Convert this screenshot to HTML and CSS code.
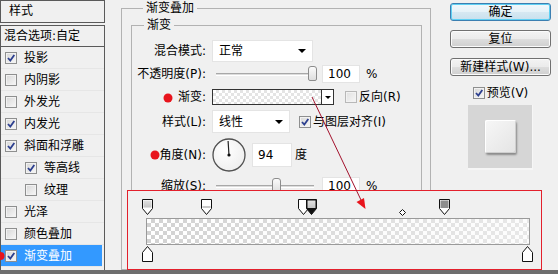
FILE: index.html
```html
<!DOCTYPE html>
<html lang="zh">
<head>
<meta charset="utf-8">
<title>图层样式 - 渐变叠加</title>
<link rel="stylesheet" href="styles.css">
</head>
<body>
<div class="page">
  <aside class="left">
    <div class="head">样式</div>
    <ul class="list">
      <li class="blend">混合选项:自定</li>
      <li><span class="cb"><svg viewBox="0 0 10 10"><path d="M2 5 L4.3 7.5 L8.3 2" /></svg></span>投影</li>
      <li><span class="cb"></span>内阴影</li>
      <li><span class="cb"></span>外发光</li>
      <li><span class="cb"><svg viewBox="0 0 10 10"><path d="M2 5 L4.3 7.5 L8.3 2" /></svg></span>内发光</li>
      <li><span class="cb"><svg viewBox="0 0 10 10"><path d="M2 5 L4.3 7.5 L8.3 2" /></svg></span>斜面和浮雕</li>
      <li class="sub"><span class="cb"><svg viewBox="0 0 10 10"><path d="M2 5 L4.3 7.5 L8.3 2" /></svg></span>等高线</li>
      <li class="sub"><span class="cb"></span>纹理</li>
      <li><span class="cb"></span>光泽</li>
      <li><span class="cb"></span>颜色叠加</li>
      <li class="sel"><span class="cb"><svg viewBox="0 0 10 10"><path d="M2 5 L4.3 7.5 L8.3 2" /></svg></span>渐变叠加</li>
    </ul>
  </aside>

  <main class="main">
    <fieldset class="outer">
      <legend>渐变叠加</legend>
      <fieldset class="inner">
        <legend>渐变</legend>

        <div class="row r1">
          <span class="lbl">混合模式:</span>
          <div class="select s-blend">正常<i class="tri"></i></div>
        </div>

        <div class="row r2">
          <span class="lbl">不透明度(P):</span>
          <div class="slider"><div class="track"></div><div class="thumb" style="left:96px"></div></div>
          <div class="field num">100</div>
          <span class="unit">%</span>
        </div>

        <div class="row r3">
          <span class="lbl">渐变:</span>
          <div class="gpick"><div class="swatch"></div><div class="drop"><i class="tri"></i></div></div>
          <span class="cb dim ml11"></span><span class="ctext">反向(R)</span>
        </div>

        <div class="row r4">
          <span class="lbl">样式(L):</span>
          <div class="select s-style">线性<i class="tri"></i></div>
          <span class="cb ml9"><svg viewBox="0 0 10 10"><path d="M2 5 L4.3 7.5 L8.3 2" /></svg></span><span class="ctext">与图层对齐(I)</span>
        </div>

        <div class="row r5">
          <span class="lbl">角度(N):</span>
          <svg class="dial" viewBox="0 0 34 34" width="34" height="34">
            <defs>
              <radialGradient id="dg" cx="0.4" cy="0.35" r="0.7">
                <stop offset="0" stop-color="#ffffff"/>
                <stop offset="1" stop-color="#eeeeee"/>
              </radialGradient>
            </defs>
            <circle cx="17" cy="17" r="16" fill="url(#dg)" stroke="#505050" stroke-width="1.3"/>
            <line x1="17" y1="17" x2="16.1" y2="3" stroke="#222" stroke-width="1.2"/>
            <circle cx="17" cy="17" r="1.6" fill="#111"/>
          </svg>
          <div class="field angle">94</div>
          <span class="unit deg">度</span>
        </div>

        <div class="row r6">
          <span class="lbl">缩放(S):</span>
          <div class="slider"><div class="track"></div><div class="thumb" style="left:60px"></div></div>
          <div class="field num">100</div>
          <span class="unit">%</span>
        </div>
      </fieldset>
    </fieldset>
  </main>

  <section class="side">
    <button class="btn default">确定</button>
    <button class="btn b2">复位</button>
    <button class="btn b3">新建样式(W)...</button>
    <div class="preview-chk"><span class="cb"><svg viewBox="0 0 10 10"><path d="M2 5 L4.3 7.5 L8.3 2" /></svg></span><span class="ctext">预览(V)</span></div>
    <div class="preview"><div class="pv-square"></div></div>
  </section>
</div>
<div class="bottom"></div>

<div class="editor">
  <div class="gbar"></div>
  <svg class="stops" viewBox="0 0 413 78" width="413" height="78">
    <defs>
      <linearGradient id="s1" x1="0" y1="0" x2="0" y2="1">
        <stop offset="0" stop-color="#e2e2e2"/><stop offset="1" stop-color="#c4c4c4"/>
      </linearGradient>
    </defs>
    <!-- opacity stops -->
    <path d="M14.5 8.5 H24.5 V17.5 L19.5 23.5 L14.5 17.5 Z" fill="#fff" stroke="#111"/>
    <rect x="15.5" y="9.5" width="8" height="7" fill="url(#s1)"/>

    <path d="M73.5 8.5 H83.5 V17.5 L78.5 23.5 L73.5 17.5 Z" fill="#fff" stroke="#111"/>
    <rect x="74.5" y="15" width="8" height="2" fill="#c8c8c8"/>

    <path d="M170.5 8.5 H180.5 V17.5 L175.5 23.5 L170.5 17.5 Z" fill="#fff" stroke="#111"/>

    <path d="M178.5 8.5 H188.5 V17.5 L183.5 23.5 L178.5 17.5 Z" fill="#111" stroke="#111"/>
    <rect x="179.5" y="9.5" width="8" height="7.5" fill="url(#s1)"/>

    <path d="M311.5 8.5 H321.5 V17.5 L316.5 23.5 L311.5 17.5 Z" fill="#fff" stroke="#111"/>
    <rect x="312.5" y="9.5" width="8" height="7.5" fill="#8e8e8e"/>

    <!-- midpoint diamond -->
    <polygon points="274.5,18.5 277.5,21.5 274.5,24.5 271.5,21.5" fill="#fff" stroke="#111"/>

    <!-- colour stops -->
    <path d="M19.5 55.5 L24.5 61.5 V70.5 H14.5 V61.5 Z" fill="#fff" stroke="#111"/>
    <path d="M399.5 55.5 L404.5 61.5 V70.5 H394.5 V61.5 Z" fill="#fff" stroke="#111"/>
  </svg>
</div>

<svg class="annot" viewBox="0 0 558 274" width="558" height="274">
  <line x1="312" y1="97" x2="361" y2="200" stroke="#a3112c" stroke-width="1"/>
  <polygon points="365.5,209 356.5,202 364,198" fill="#e8141c"/>
  <circle cx="168" cy="98" r="4.5" fill="#e8141c"/>
  <circle cx="155" cy="155" r="4.5" fill="#e8141c"/>
  <circle cx="0.5" cy="256" r="4" fill="#e8141c"/>
</svg>
</body>
</html>
```

FILE: styles.css
```css
* { box-sizing: border-box; }

html, body {
  margin: 0;
  padding: 0;
}

body {
  width: 558px;
  height: 274px;
  overflow: hidden;
  position: relative;
  background: #f0f0f0;
  color: #000;
  font-family: "DejaVu Sans", "Noto Sans CJK SC", sans-serif;
  font-size: 12px;
  line-height: 16px;
}

.page {
  display: flex;
  height: 270px;
}

.bottom {
  height: 4px;
  background: #6e6e6e;
}

/* ---------- left style list ---------- */
.left {
  width: 105px;
  flex: none;
  display: flex;
  flex-direction: column;
}

.head {
  height: 23px;
  border: 1px solid #5a5a5a;
  padding-left: 8px;
  line-height: 21px;
}

.list {
  list-style: none;
  margin: 2px 0 0;
  padding: 0;
  flex: 1;
  border: 1px solid #5a5a5a;
  border-bottom: none;
}

.list li {
  height: 22px;
  display: flex;
  align-items: center;
  padding-left: 4px;
  border-bottom: 1px solid #e6e6e6;
}

.list li.blend {
  height: 21px;
  padding-left: 3px;
  border-bottom: 1px solid #5a5a5a;
}

.list li.sub { padding-left: 24px; }

.list li .cb { margin-right: 7px; }

.list li.sel {
  background: #3399ff;
  color: #fff;
  margin-right: 2px;
}

/* ---------- checkbox ---------- */
.cb {
  display: inline-block;
  flex: none;
  width: 12px;
  height: 12px;
  border: 1px solid #8e8f8f;
  background: linear-gradient(135deg, #d6d6d6, #f8f8f8);
  box-shadow: inset 0 0 0 1px #f2f2f2;
}

.cb svg {
  display: block;
  width: 10px;
  height: 10px;
}

.cb svg path {
  fill: none;
  stroke: #2c3f8f;
  stroke-width: 1.8;
}

.cb.dim {
  border-color: #b8b8b8;
  background: linear-gradient(135deg, #e0e0e0, #f6f6f6);
}

.ml11 { margin-left: 11px; }
.ml9 { margin-left: 9px; }

.ctext { margin-left: 2px; }

/* ---------- main fieldsets ---------- */
.main {
  margin-left: 16px;
  width: 310px;
  flex: none;
}

fieldset {
  margin: 0;
  min-width: 0;
}

legend {
  padding: 0 3px;
  margin-left: 12px;
  line-height: 16px;
}

.outer {
  height: 270px;
  padding: 0 8px 0 9px;
  border: 1px solid #b2b2b2;
}

.inner {
  margin-top: 1px;
  height: 200px;
  padding: 7px 0 0 0;
  border: 1px solid #b2b2b2;
}

.row {
  display: flex;
  align-items: center;
}

.lbl {
  width: 74px;
  flex: none;
  text-align: right;
  margin-right: 6px;
  white-space: nowrap;
}

.r1 { height: 22px; }
.r2 { height: 18px; margin-top: 3px; }
.r3 { height: 16px; margin-top: 6px; }
.r4 { height: 23px; margin-top: 5px; }
.r5 { height: 34px; margin-top: 5px; }
.r6 { height: 18px; margin-top: 5px; }

.select {
  height: 100%;
  display: flex;
  align-items: center;
  justify-content: space-between;
  background: #fff;
  border: 1px solid #e4e4e4;
  padding: 0 6px 0 6px;
}

.s-blend { width: 101px; }
.s-style { width: 78px; }

.tri {
  display: block;
  width: 0;
  height: 0;
  border-left: 4px solid transparent;
  border-right: 4px solid transparent;
  border-top: 4px solid #000;
}

/* sliders */
.slider {
  position: relative;
  width: 106px;
  height: 100%;
  display: flex;
  align-items: center;
  padding: 0 4px;
}

.track {
  width: 100%;
  height: 3px;
  border-top: 1px solid #a8a8a8;
  border-bottom: 1px solid #ffffff;
  background: #dcdcdc;
}

.thumb {
  position: absolute;
  top: 1px;
  width: 9px;
  height: 15px;
  border: 1px solid #8c8c8c;
  border-radius: 3px 3px 2px 2px;
  background: linear-gradient(#fbfbfb, #dedede);
}

.field {
  background: #fff;
  border: 1px solid #e4e4e4;
  height: 100%;
  display: flex;
  align-items: center;
  padding-left: 5px;
}

.num { width: 38px; margin-left: 4px; }
.unit { margin-left: 6px; }
.angle { width: 40px; height: 24px; margin-left: 6px; }
.unit.deg { margin-left: 3px; }

.dial { display: block; flex: none; }

/* gradient picker */
.gpick {
  display: flex;
  height: 16px;
  border: 1px solid #333;
}

.swatch {
  width: 109px;
  border-right: 1px solid #333;
  background-color: #ffffff;
  background-image:
    linear-gradient(45deg, #e4e4e4 25%, transparent 25%, transparent 75%, #e4e4e4 75%),
    linear-gradient(45deg, #e4e4e4 25%, transparent 25%, transparent 75%, #e4e4e4 75%);
  background-size: 6px 6px;
  background-position: 0 0, 3px 3px;
}

.drop {
  width: 11px;
  background: #fff;
  display: flex;
  align-items: center;
  justify-content: center;
}

.drop .tri {
  border-left-width: 3px;
  border-right-width: 3px;
  border-top-width: 3px;
}

/* ---------- right column ---------- */
.side {
  margin-left: 19px;
  width: 101px;
  flex: none;
  display: flex;
  flex-direction: column;
  align-items: center;
  padding-top: 3px;
}

.btn {
  width: 101px;
  height: 18px;
  padding: 0;
  font: inherit;
  line-height: 14px;
  color: #000;
  border: 1px solid #707070;
  border-radius: 3px;
  background: linear-gradient(#f3f3f3 0%, #ebebeb 48%, #dddddd 52%, #cfcfcf 100%);
  box-shadow: inset 0 0 0 1px #fbfbfb;
}

.btn.default {
  border-color: #3c7fb1;
  box-shadow: inset 0 0 0 1px #5fd0f3;
  background: linear-gradient(#f2f8fb 0%, #e6f2f8 48%, #d6e8f2 52%, #c8e0ed 100%);
}

.b2 { margin-top: 9px; }
.b3 { margin-top: 10px; }

.preview-chk {
  margin-top: 9px;
  height: 16px;
  display: flex;
  align-items: center;
}

.preview {
  margin-top: 4px;
  width: 65px;
  height: 65px;
  background: #d6d6d6;
  border-right: 1px solid #f6f6f6;
  border-bottom: 2px solid #f6f6f6;
  display: flex;
  justify-content: center;
  align-items: center;
}

.pv-square {
  width: 31px;
  height: 33px;
  border-radius: 2px;
  background: linear-gradient(135deg, #f7f7f7, #e4e4e4);
  box-shadow: inset 1px 1px 0 #ffffff, inset -1px -1px 0 #cfcfcf, 1px 2px 2px rgba(0,0,0,0.35);
}

/* ---------- gradient editor overlay ---------- */
.editor {
  position: absolute;
  left: 127px;
  top: 190px;
  width: 415px;
  height: 80px;
  border: 1px solid #e3202c;
  background: #f0f0f0;
  z-index: 5;
}

.gbar {
  position: absolute;
  left: 18px;
  top: 27px;
  width: 384px;
  height: 27px;
  border: 1px solid #9a9a9a;
  background-color: #ffffff;
  background-image:
    linear-gradient(90deg, rgba(240,240,240,0) 0%, rgba(246,246,246,0.25) 40%, rgba(250,250,250,0.55) 100%),
    linear-gradient(45deg, #d2d2d2 25%, transparent 25%, transparent 75%, #d2d2d2 75%),
    linear-gradient(45deg, #d2d2d2 25%, transparent 25%, transparent 75%, #d2d2d2 75%);
  background-size: 100% 100%, 8px 8px, 8px 8px;
  background-position: 0 0, 0 0, 4px 4px;
}

.stops {
  position: absolute;
  left: 0;
  top: 0;
}

.annot {
  position: absolute;
  left: 0;
  top: 0;
  z-index: 10;
  pointer-events: none;
}
```
